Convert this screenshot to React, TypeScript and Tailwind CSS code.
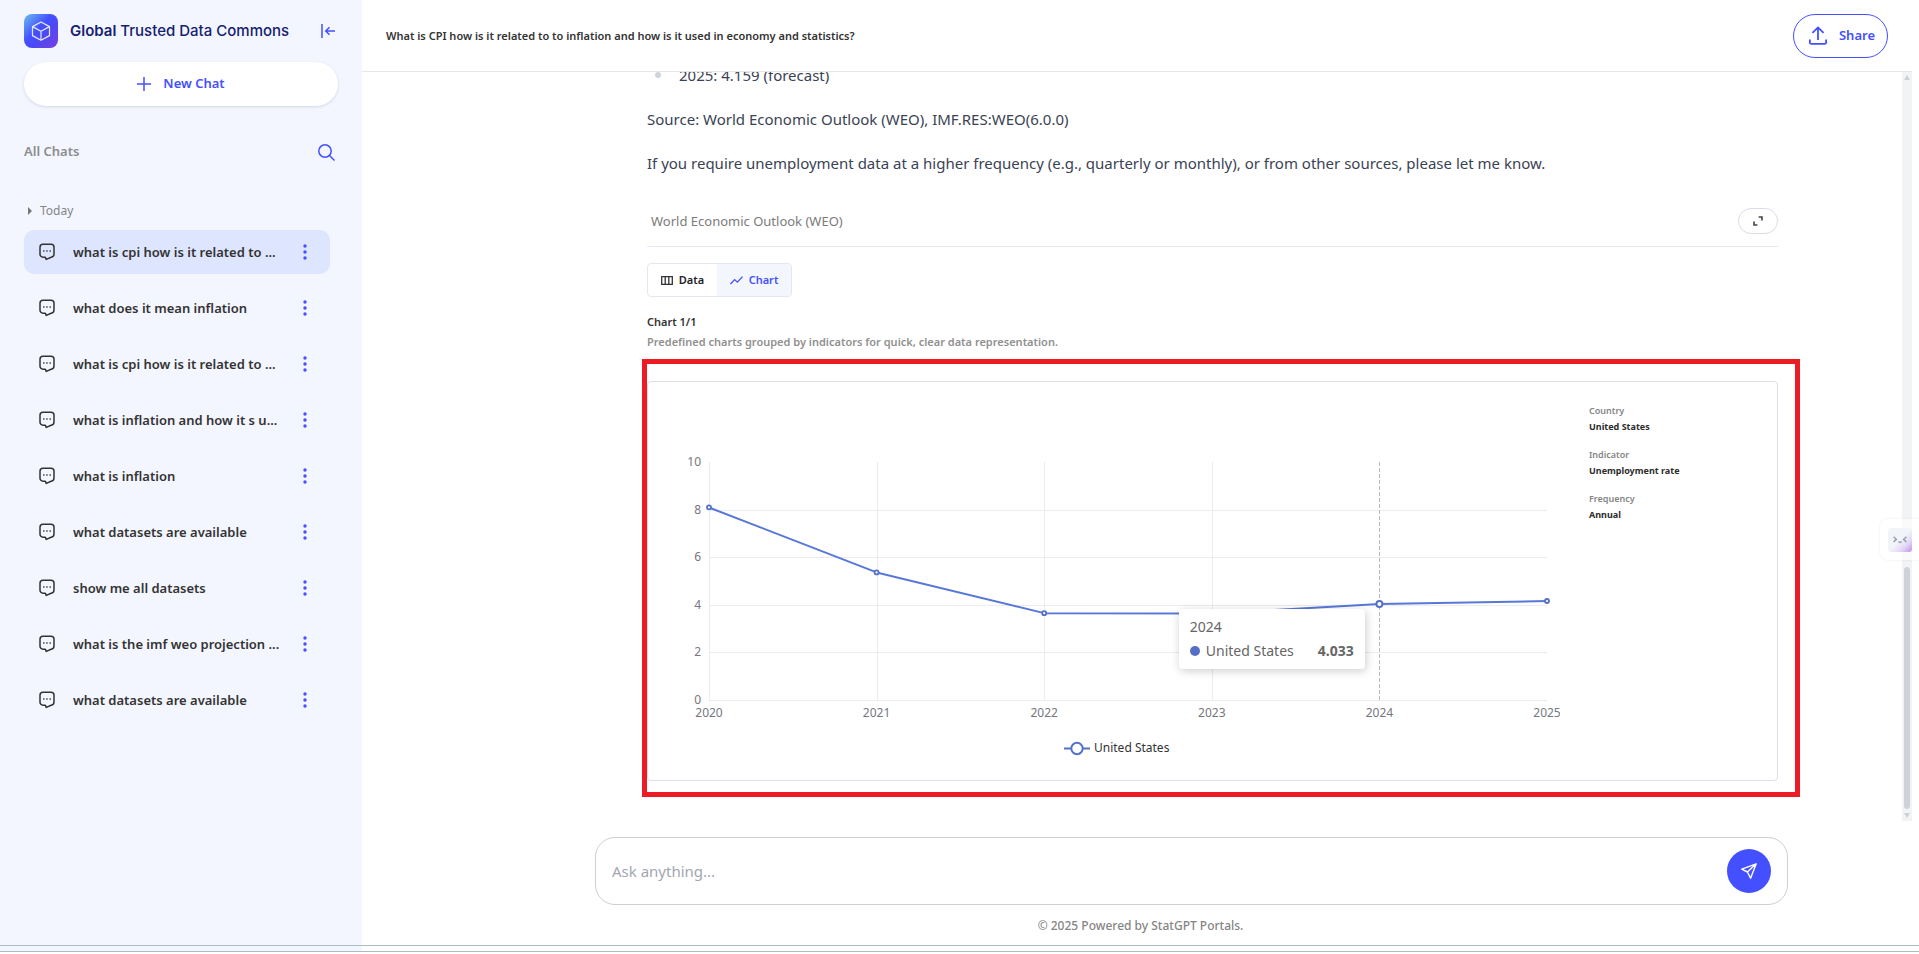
import React from "react";

const chats = [
  "what is cpi how is it related to ...",
  "what does it mean inflation",
  "what is cpi how is it related to ...",
  "what is inflation and how it s u...",
  "what is inflation",
  "what datasets are available",
  "show me all datasets",
  "what is the imf weo projection ...",
  "what datasets are available",
];

const series = [
  { year: "2020", value: 8.09 },
  { year: "2021", value: 5.36 },
  { year: "2022", value: 3.65 },
  { year: "2023", value: 3.63 },
  { year: "2024", value: 4.033 },
  { year: "2025", value: 4.159 },
];

const meta = [
  { label: "Country", value: "United States" },
  { label: "Indicator", value: "Unemployment rate" },
  { label: "Frequency", value: "Annual" },
];

const plot = { left: 61, right: 899, top: 80, bottom: 318, max: 10 };
const px = (i: number) => plot.left + (i * (plot.right - plot.left)) / (series.length - 1);
const py = (v: number) => plot.bottom - (v * (plot.bottom - plot.top)) / plot.max;

function CubeLogo() {
  return (
    <span className="flex size-[34px] shrink-0 items-center justify-center rounded-lg bg-[linear-gradient(135deg,#6cc0ea_0%,#4450ff_42%,#4b49f5_60%,#7a3fe0_100%)]">
      <svg width="20" height="20" viewBox="0 0 20 20" fill="none" stroke="#e6ebff" strokeWidth="1.2" strokeLinejoin="round" aria-hidden="true">
        <path d="M10 1 18.5 5.6V14.6L10 19.2 1.5 14.6V5.6Z" />
        <path d="M1.5 5.6 10 10.2 18.5 5.6M10 10.2V19.2" />
      </svg>
    </span>
  );
}

function ChatIcon() {
  return (
    <svg width="16" height="18" viewBox="0 0 16 18" fill="none" stroke="#333" strokeWidth="1.5" strokeLinejoin="round" className="shrink-0" aria-hidden="true">
      <path d="M4 1.2H12A3 3 0 0 1 15 4.2V11A3 3 0 0 1 12.8 14L7.2 16.4 6.4 14.2H4A3 3 0 0 1 1 11.2V4.2A3 3 0 0 1 4 1.2Z" />
      <path d="M4 8h1.6M7.2 8h1.6M10.4 8H12" stroke="#555" />
    </svg>
  );
}

function Dots() {
  return (
    <svg width="4" height="16" viewBox="0 0 4 16" fill="#4450ff" aria-hidden="true">
      <circle cx="2" cy="2" r="1.7" />
      <circle cx="2" cy="8" r="1.7" />
      <circle cx="2" cy="14" r="1.7" />
    </svg>
  );
}

function Sidebar() {
  return (
    <aside className="flex w-[362px] shrink-0 flex-col bg-[#f3f6ff] px-6 pt-[14px]">
      <div className="flex h-[34px] items-center">
        <CubeLogo />
        <span className="ml-3 flex-1 font-[Inter,sans-serif] text-[15px] leading-6 font-medium text-[#16216f]">
          <strong className="font-semibold">Global</strong> Trusted Data Commons
        </span>
        <button type="button" aria-label="Collapse sidebar" className="mr-[3px]">
          <svg width="14" height="14" viewBox="0 0 14 14" fill="none" stroke="#4450ff" strokeWidth="1.5" aria-hidden="true">
            <path d="M1 0V14M14 7H5M8.5 3.2 4.7 7 8.5 10.8" />
          </svg>
        </button>
      </div>

      <button
        type="button"
        className="mt-[14px] flex h-11 items-center justify-center gap-3 rounded-full bg-white text-[13px] font-semibold text-[#4450ff] shadow-[0_1px_3px_rgba(40,50,110,0.16)]"
      >
        <svg width="14" height="14" viewBox="0 0 14 14" stroke="#4450ff" strokeWidth="1.5" aria-hidden="true">
          <path d="M7 0V14M0 7H14" />
        </svg>
        New Chat
      </button>

      <div className="mt-8 flex h-7 items-center justify-between">
        <h2 className="text-[13px] font-semibold text-[#8c8c8c]">All Chats</h2>
        <button type="button" aria-label="Search chats" className="mr-[3px]">
          <svg width="17" height="17" viewBox="0 0 17 17" fill="none" stroke="#4450ff" strokeWidth="1.5" aria-hidden="true">
            <circle cx="7" cy="7" r="6.2" />
            <path d="M11.5 11.5 16.5 16.5" />
          </svg>
        </button>
      </div>

      <button type="button" className="mt-9 flex h-[18px] items-center gap-2 pl-1 text-[12px] text-[#858585]">
        <svg width="4" height="8" viewBox="0 0 4 8" fill="#777" aria-hidden="true">
          <path d="M0 0 4 4 0 8Z" />
        </svg>
        Today
      </button>

      <ul className="mt-[10px] mr-2 flex flex-col gap-3">
        {chats.map((title, i) => (
          <li
            key={i}
            className={
              i === 0
                ? "flex h-11 items-center rounded-[10px] bg-[#dee6ff] pr-[23px] pl-[15px]"
                : "flex h-11 items-center rounded-[10px] pr-[23px] pl-[15px]"
            }
          >
            <a href="#" className="flex min-w-0 flex-1 items-center gap-[18px]">
              <ChatIcon />
              <span className="truncate text-[13px] leading-5 font-semibold text-[#333]">{title}</span>
            </a>
            <button type="button" aria-label={"Options for " + title}>
              <Dots />
            </button>
          </li>
        ))}
      </ul>
    </aside>
  );
}

function Chart() {
  return (
    <div className="relative min-w-0 flex-1">
      <svg viewBox="0 0 912 398" className="block w-full font-['Noto_Sans',sans-serif] text-[12px]" role="img" aria-label="Unemployment rate, United States">
        {[0, 2, 4, 6, 8].map((v) => (
          <path key={v} d={`M${plot.left} ${Math.round(py(v)) + 0.5}H${plot.right}`} stroke="#ececf0" />
        ))}
        {series.slice(0, 4).map((p, i) => (
          <path key={p.year} d={`M${Math.round(px(i)) + 0.5} ${plot.top}V${plot.bottom}`} stroke="#ececf0" />
        ))}
        <path d={`M731.5 ${plot.top}V${plot.bottom}`} stroke="#b9b9bd" strokeDasharray="4 2" />
        {[0, 2, 4, 6, 8, 10].map((v) => (
          <text key={v} x="53" y={py(v) + 4} textAnchor="end" fill="#75777f">
            {v}
          </text>
        ))}
        {series.map((p, i) => (
          <text key={p.year} x={px(i)} y="335" textAnchor="middle" fill="#75777f">
            {p.year}
          </text>
        ))}
        <polyline points={series.map((p, i) => `${px(i)},${py(p.value)}`).join(" ")} fill="none" stroke="#5877d8" strokeWidth="2" strokeLinejoin="bevel" />
        {series.map((p, i) => (
          <circle key={p.year} cx={px(i)} cy={py(p.value)} r={p.year === "2024" ? 3 : 2} fill="#fff" stroke="#5470c6" strokeWidth={p.year === "2024" ? 2 : 1.8} />
        ))}
        <path d="M416 366.5H442" stroke="#5470c6" strokeWidth="2" />
        <circle cx="429" cy="366.5" r="5.7" fill="#fff" stroke="#5470c6" strokeWidth="2" />
        <text x="446" y="370" fill="#333">
          United States
        </text>
      </svg>
      <div className="absolute top-[57%] left-[58.2%] w-[186px] rounded bg-white px-[11px] py-1.5 text-[14px] leading-6 text-[#666] shadow-[1px_2px_10px_rgba(0,0,0,0.2)]">
        <div>2024</div>
        <div className="flex items-center">
          <span className="mr-1.5 size-[10px] rounded-full bg-[#5470c6]" />
          <span className="flex-1">United States</span>
          <strong className="font-bold">4.033</strong>
        </div>
      </div>
    </div>
  );
}

function Answer() {
  return (
    <div className="-mt-[9px] pr-[124px] pl-[285px] text-[#3a4354]">
      <ul className="list-none">
        <li className="flex h-6 items-center gap-[18px] pl-2 text-[15px] leading-6">
          <span className="size-1.5 rounded-full bg-[#d0d4dc]" />
          2025: 4.159 (forecast)
        </li>
      </ul>
      <p className="mt-5 text-[15px] leading-6">Source: World Economic Outlook (WEO), IMF.RES:WEO(6.0.0)</p>
      <p className="mt-5 text-[15px] leading-6">
        If you require unemployment data at a higher frequency (e.g., quarterly or monthly), or from other sources, please let me know.
      </p>

      <div className="mt-[33px] flex items-start justify-between border-b border-[#e6e9f3] pb-3">
        <h3 className="pl-1 text-[13px] leading-[26px] text-[#7b7b7b]">World Economic Outlook (WEO)</h3>
        <button type="button" aria-label="Expand" className="flex h-[26px] w-10 items-center justify-center rounded-full border border-[#dcdce8]">
          <svg width="10" height="10" viewBox="0 0 10 10" fill="none" stroke="#444" strokeWidth="1.6" aria-hidden="true">
            <path d="M5.6 1H9V4.4M4.4 9H1V5.6" />
          </svg>
        </button>
      </div>

      <div className="mt-4 flex h-[34px] w-[145px] overflow-hidden rounded border border-[#e3e7f3] text-[11px] font-semibold">
        <button type="button" className="flex w-[69px] items-center justify-center gap-1.5 text-[#222]">
          <svg width="12" height="9" viewBox="0 0 12 9" fill="none" stroke="#333" strokeWidth="1.3" aria-hidden="true">
            <path d="M.7.7H11.3V8.3H.7ZM4.2.7V8.3M7.8.7V8.3" />
          </svg>
          Data
        </button>
        <button type="button" className="flex flex-1 items-center justify-center gap-1.5 bg-[#f3f6fd] text-[#4450ff]">
          <svg width="13" height="9" viewBox="0 0 13 9" fill="none" stroke="#4450ff" strokeWidth="1.3" aria-hidden="true">
            <path d="M.5 8 4.6 3.6 7.4 6.2 12.5.6" />
          </svg>
          Chart
        </button>
      </div>

      <h4 className="mt-[17px] text-[11px] leading-4 font-semibold text-[#333]">Chart 1/1</h4>
      <p className="mt-1 text-[11px] leading-4 font-semibold text-[#909090]">Predefined charts grouped by indicators for quick, clear data representation.</p>

      <div className="relative mt-[31px]">
        <div className="flex items-start rounded border border-[#dedeea]">
          <Chart />
          <dl className="ml-[29px] flex w-[188px] shrink-0 flex-col gap-3 pt-[21px] text-[9px] leading-4">
            {meta.map((m) => (
              <div key={m.label}>
                <dt className="font-semibold text-[#858585]">{m.label}</dt>
                <dd className="font-bold text-[#2c2c2c]">{m.value}</dd>
              </div>
            ))}
          </dl>
        </div>
        <div className="pointer-events-none absolute -top-[22px] -right-[22px] -bottom-4 -left-[5px] border-[5px] border-[#ed1c24]" />
      </div>
    </div>
  );
}

function ScrollTrack() {
  return (
    <div className="flex w-[10px] flex-col items-center justify-between bg-[#f2f3f5] py-[3px]" aria-hidden="true">
      <svg width="6" height="5" viewBox="0 0 6 5" fill="#cdd0d6">
        <path d="M3 0 6 5H0Z" />
      </svg>
      <div className="flex flex-col items-center gap-1">
        <div className="h-[242px] w-1.5 rounded-full bg-[#cfd2d9]" />
        <svg width="6" height="5" viewBox="0 0 6 5" fill="#cdd0d6">
          <path d="M0 0H6L3 5Z" />
        </svg>
      </div>
    </div>
  );
}

export default function App() {
  return (
    <div className="flex h-screen flex-col bg-white font-['Noto_Sans','Open_Sans',sans-serif]">
      <div className="flex min-h-0 flex-1">
        <Sidebar />
        <main className="relative flex min-w-0 flex-1 flex-col">
          <header className="mr-[7px] flex h-[72px] shrink-0 items-center justify-between border-b border-[#e6e6e9] px-6">
            <h1 className="text-[11px] leading-5 font-semibold text-[#333]">
              What is CPI how is it related to to inflation and how is it used in economy and statistics?
            </h1>
            <button type="button" className="flex h-11 items-center gap-3 rounded-full border border-[#4450ff] pr-3 pl-[15px] text-[13px] font-semibold text-[#4450ff]">
              <svg width="18" height="19" viewBox="0 0 18 19" fill="none" stroke="#4450ff" strokeWidth="1.8" aria-hidden="true">
                <path d="M9 14V1.6M3.4 6.8 9 1.4 14.6 6.8M.9 13.4V16.4A1.4 1.4 0 0 0 2.3 17.9H15.7A1.4 1.4 0 0 0 17.1 16.4V13.4" />
              </svg>
              Share
            </button>
          </header>

          <section className="mr-[7px] flex min-h-0 flex-1">
            <div className="min-w-0 flex-1 overflow-hidden">
              <Answer />
            </div>
            <ScrollTrack />
          </section>

          <form className="mt-4 mr-[131px] ml-[233px] flex h-[68px] shrink-0 items-center rounded-[20px] border border-[#cfcfcf] px-4">
            <input aria-label="Message" placeholder="Ask anything..." className="min-w-0 flex-1 text-[15px] text-[#333] outline-none placeholder:text-[#a2a6b0]" />
            <button type="button" aria-label="Send" className="flex size-11 shrink-0 items-center justify-center rounded-full bg-[#4450ff]">
              <svg width="16" height="16" viewBox="0 0 16 16" fill="none" stroke="#fff" strokeWidth="1.4" strokeLinejoin="round" aria-hidden="true">
                <path d="M15.2.8.8 6.2 6.4 9 9.6 15.2ZM15.2.8 6.4 9" />
              </svg>
            </button>
          </form>
          <footer className="flex h-10 shrink-0 items-center justify-center pt-0.5 text-[12px] font-medium text-[#858585]">© 2025 Powered by StatGPT Portals.</footer>

          <div className="absolute top-[519px] right-0 flex h-[41px] w-[39px] items-center rounded-l-lg bg-white/60 pl-2 shadow-[0_0_3px_rgba(0,0,0,0.08)]">
            <button type="button" aria-label="Open assistant" className="flex size-6 items-center justify-center rounded-[3px] bg-[linear-gradient(135deg,#f1f4f9_50%,#e3d5f5_75%,#bd93ea_100%)]">
              <svg width="14" height="8" viewBox="0 0 14 8" fill="none" stroke="#9c9fae" strokeWidth="1.5" aria-hidden="true">
                <path d="M.6.8 3.4 3.4.6 6M13.4.8 10.6 3.4 13.4 6M5.4 5.6Q7 7.4 8.6 5.6" />
              </svg>
            </button>
          </div>
        </main>
      </div>
      <div className="flex h-[7px] shrink-0 border-y border-[#a9bcc0]">
        <div className="w-[362px] bg-[#f3f6ff]" />
      </div>
      <div className="h-0.5 shrink-0" />
    </div>
  );
}
